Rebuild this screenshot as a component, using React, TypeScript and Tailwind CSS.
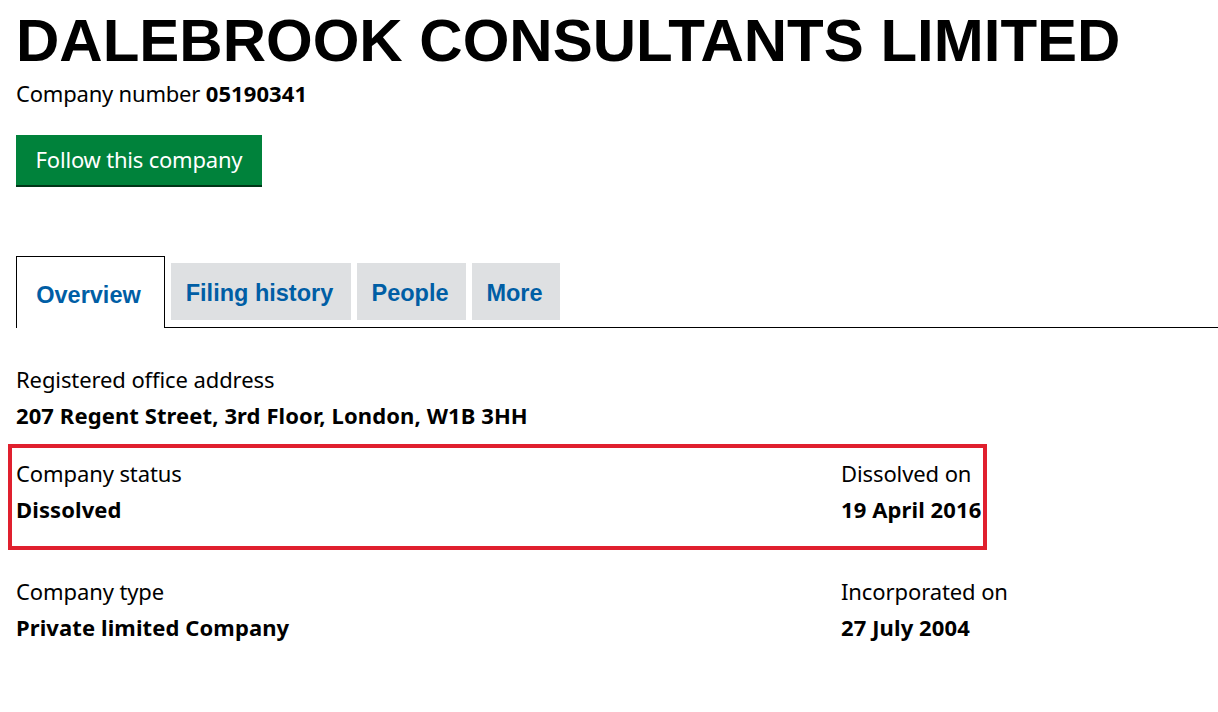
const body = "font-['Noto_Sans',sans-serif]";
const arial = "font-['Liberation_Sans',Arial,sans-serif]";

function Field({ label, value }: { label: string; value: string }) {
  return (
    <div>
      <div className="text-[22px] leading-[24px] tracking-[-0.1px] text-black">{label}</div>
      <div className="mt-[12px] text-[22px] leading-[24px] tracking-[0.1px] font-bold text-black">{value}</div>
    </div>
  );
}

export default function App() {
  const tabs = [
    { label: "Filing history", w: "w-[180px]" },
    { label: "People", w: "w-[109px]" },
    { label: "More", w: "w-[88px]" },
  ];
  return (
    <div className={`${body} bg-white w-[1218px] h-[712px] overflow-hidden text-black`}>
      <div className="pl-4">
        <h1 className={`${arial} m-0 pt-[6px] text-[60px] leading-[70px] font-bold`}>
          DALEBROOK CONSULTANTS LIMITED
        </h1>
        <p className="m-0 mt-[5px] text-[22px] leading-[24px] tracking-[-0.2px]">
          Company number <strong className="font-bold tracking-[0.1px]">05190341</strong>
        </p>
        <button className="mt-[30px] h-[50px] w-[246px] bg-[#00823b] text-white text-[22px] tracking-[-0.2px] shadow-[0_2px_0_#003618] pb-[2px]">
          Follow this company
        </button>

        <div className="mt-[71px] flex items-end border-b border-black">
          <div className={`${arial} -mb-px h-[72px] w-[149px] border border-b-0 border-black bg-white flex items-center justify-center pt-[6px] pr-[4px] text-[23.5px] font-bold text-[#005ea5]`}>
            Overview
          </div>
          <div className="flex gap-[6px] pl-[6px] pb-[7px]">
            {tabs.map((t) => (
              <div
                key={t.label}
                className={`${arial} ${t.w} h-[57px] bg-[#dee0e2] flex items-center justify-center pt-[4px] pr-[3px] text-[23.5px] font-bold text-[#005ea5]`}
              >
                {t.label}
              </div>
            ))}
          </div>
        </div>

        <div className="mt-[39px]">
          <Field label="Registered office address" value="207 Regent Street, 3rd Floor, London, W1B 3HH" />
        </div>
      </div>

      <div className="ml-[8px] mt-[17px] w-[979px] h-[106px] border-4 border-[#e0202e] pl-[4px] pt-[13px] flex">
        <div className="w-[825px]">
          <Field label="Company status" value="Dissolved" />
        </div>
        <Field label="Dissolved on" value="19 April 2016" />
      </div>

      <div className="pl-4 mt-[29px] flex">
        <div className="w-[825px]">
          <Field label="Company type" value="Private limited Company" />
        </div>
        <Field label="Incorporated on" value="27 July 2004" />
      </div>
    </div>
  );
}
